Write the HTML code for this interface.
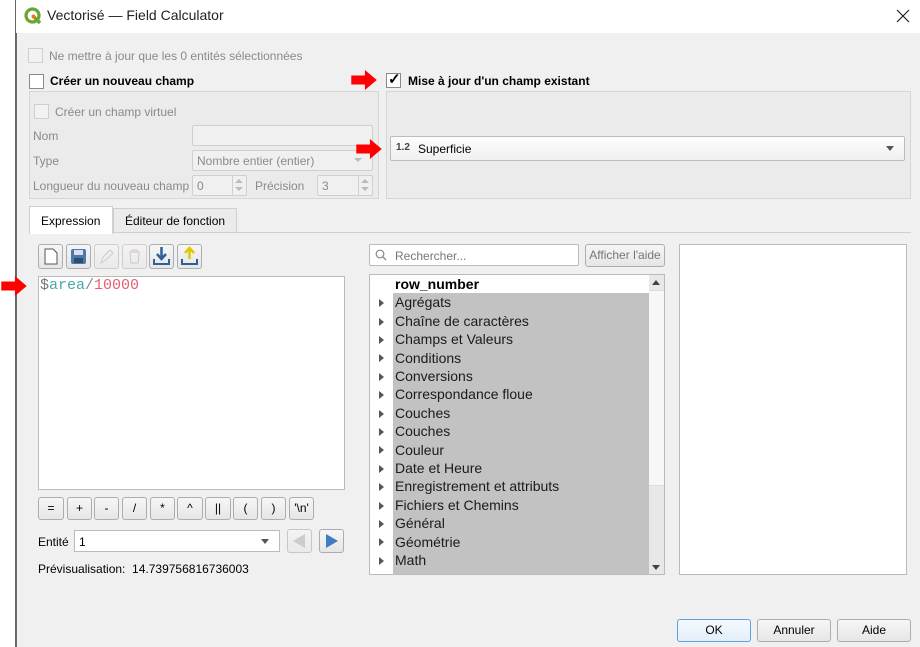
<!DOCTYPE html>
<html><head><meta charset="utf-8"><style>
*{box-sizing:border-box;margin:0;padding:0}
body{width:920px;height:647px;background:#fff;font-family:"Liberation Sans",sans-serif;font-size:12px;color:#000;position:relative;overflow:hidden}
.a{position:absolute}
.dlg{left:16px;top:0;width:904px;height:647px;background:#f0f0f0;border-left:1px solid #6b6b6b}
.title{left:16px;top:0;width:904px;height:33px;background:#fff}
.cb{position:absolute;width:15px;height:15px;border:1px solid #8a8a8a;background:#fff}
.cbd{border-color:#cfcfcf;background:#f2f2f2}
.gray{color:#8a8a8a}
.grp{position:absolute;border:1px solid #d6d6d6;background:#ebebeb}
.inp{position:absolute;border:1px solid #cfcfcf;background:#f0f0f0;border-radius:2px}
.btn{position:absolute;border:1px solid #adadad;background:linear-gradient(#f6f6f6,#e6e6e6);border-radius:3px;text-align:center}
.arrow{position:absolute;width:28px;height:20px}
.li{position:absolute;left:395px;font-size:14px;color:#1b1b1b}
.tri{position:absolute;left:379px;width:0;height:0;border-left:5px solid #555;border-top:4px solid transparent;border-bottom:4px solid transparent}
.spin{position:absolute;width:14px;border-left:1px solid #d0d0d0}
</style></head><body>
<div class="a dlg"></div>
<div class="a title"></div>
<div class="a" style="left:0;top:0;width:16px;height:647px;background:#fff;border-right:1px solid #666"></div>
<svg class="a" style="left:24px;top:7px" width="18" height="18" viewBox="0 0 18 18"><circle cx="8.5" cy="8.5" r="6.5" fill="none" stroke="#6aa637" stroke-width="3.2"/><path d="M10 10 L16 16" stroke="#6aa637" stroke-width="3.5"/><circle cx="9.5" cy="9.5" r="2" fill="#ee7913"/></svg>
<div class="a" style="left:47px;top:7px;font-size:14px;color:#222">Vectorisé — Field Calculator</div>
<svg class="a" style="left:896px;top:9px" width="14" height="14"><path d="M1 1L13 13M13 1L1 13" stroke="#222" stroke-width="1.2"/></svg>

<div class="cb cbd" style="left:28px;top:48px"></div>
<div class="a gray" style="left:49px;top:49px">Ne mettre à jour que les 0 entités sélectionnées</div>
<div class="cb" style="left:29px;top:74px"></div>
<div class="a" style="left:50px;top:74px;font-weight:bold">Créer un nouveau champ</div>
<div class="grp" style="left:29px;top:91px;width:350px;height:108px"></div>
<div class="cb cbd" style="left:34px;top:104px"></div>
<div class="a gray" style="left:55px;top:105px">Créer un champ virtuel</div>
<div class="a gray" style="left:33px;top:129px">Nom</div>
<div class="inp" style="left:192px;top:125px;width:181px;height:21px"></div>
<div class="a gray" style="left:33px;top:154px">Type</div>
<div class="inp" style="left:192px;top:150px;width:181px;height:21px"></div>
<div class="a gray" style="left:197px;top:154px">Nombre entier (entier)</div>
<div class="a" style="left:354px;top:158px;border-top:4px solid #bbb;border-left:4px solid transparent;border-right:4px solid transparent"></div>
<div class="a gray" style="left:33px;top:179px">Longueur du nouveau champ</div>
<div class="inp" style="left:192px;top:175px;width:55px;height:21px"></div>
<div class="spin" style="left:232px;top:176px;height:19px"></div>
<div class="a" style="left:235px;top:179px;border-bottom:4px solid #bbb;border-left:4px solid transparent;border-right:4px solid transparent"></div>
<div class="a" style="left:235px;top:187px;border-top:4px solid #bbb;border-left:4px solid transparent;border-right:4px solid transparent"></div>
<div class="a gray" style="left:197px;top:179px">0</div>
<div class="a gray" style="left:255px;top:179px">Précision</div>
<div class="inp" style="left:317px;top:175px;width:56px;height:21px"></div>
<div class="spin" style="left:358px;top:176px;height:19px"></div>
<div class="a" style="left:361px;top:179px;border-bottom:4px solid #bbb;border-left:4px solid transparent;border-right:4px solid transparent"></div>
<div class="a" style="left:361px;top:187px;border-top:4px solid #bbb;border-left:4px solid transparent;border-right:4px solid transparent"></div>
<div class="a gray" style="left:322px;top:179px">3</div>

<div class="cb" style="left:386px;top:73px"></div>
<div class="a" style="left:388px;top:70px;font-size:15px;font-weight:bold">✓</div>
<div class="a" style="left:408px;top:74px;font-weight:bold">Mise à jour d'un champ existant</div>
<div class="grp" style="left:386px;top:91px;width:525px;height:108px"></div>
<div class="a" style="left:390px;top:136px;width:515px;height:25px;border:1px solid #bcbcbc;background:linear-gradient(#fdfdfd,#f0f0f0);border-radius:2px"></div>
<div class="a" style="left:396px;top:142px;font-size:10px;font-weight:bold;color:#444">1.2</div>
<div class="a" style="left:418px;top:142px">Superficie</div>
<div class="a" style="left:886px;top:146px;border-top:5px solid #555;border-left:4px solid transparent;border-right:4px solid transparent"></div>

<svg class="arrow" style="left:350px;top:70px" viewBox="0 0 28 22"><path d="M0 6H15V0L28 11L15 22V16H0Z" fill="#f00"/></svg>
<svg class="arrow" style="left:355px;top:139px" viewBox="0 0 28 22"><path d="M0 6H15V0L28 11L15 22V16H0Z" fill="#f00"/></svg>
<svg class="arrow" style="left:0px;top:276px" viewBox="0 0 28 22"><path d="M0 6H15V0L28 11L15 22V16H0Z" fill="#f00"/></svg>

<div class="a" style="left:29px;top:232px;width:882px;height:1px;background:#d0d0d0"></div>
<div class="a" style="left:29px;top:206px;width:84px;height:28px;background:#fff;border:1px solid #d0d0d0;border-bottom:none"></div>
<div class="a" style="left:41px;top:214px">Expression</div>
<div class="a" style="left:113px;top:208px;width:124px;height:25px;background:#ebebeb;border:1px solid #d0d0d0"></div>
<div class="a" style="left:125px;top:214px">Éditeur de fonction</div>

<div class="btn" style="left:38px;top:244px;width:25px;height:25px"></div>
<svg class="a" style="left:43px;top:248px" width="16" height="17"><path d="M2 1H10L14 5V16H2Z" fill="#fff" stroke="#555"/></svg>
<div class="btn" style="left:66px;top:244px;width:25px;height:25px"></div>
<svg class="a" style="left:70px;top:248px" width="17" height="17"><rect x="1" y="1" width="15" height="15" rx="2" fill="#4b79ad"/><rect x="4" y="2" width="9" height="5" fill="#dde"/><rect x="4" y="10" width="9" height="5" fill="#2d4c6e"/></svg>
<div class="btn" style="left:94px;top:244px;width:25px;height:25px;opacity:.5"></div>
<svg class="a" style="left:98px;top:248px" width="17" height="17"><path d="M3 15L5 9L12 2L15 5L8 12Z" fill="none" stroke="#ccc"/></svg>
<div class="btn" style="left:122px;top:244px;width:25px;height:25px;opacity:.5"></div>
<svg class="a" style="left:126px;top:248px" width="17" height="17"><path d="M3 4H14M6 4V2H11V4M4 5L5 15H12L13 5" fill="none" stroke="#d4c4c4"/></svg>
<div class="btn" style="left:149px;top:244px;width:25px;height:25px"></div>
<svg class="a" style="left:152px;top:246px" width="19" height="20"><path d="M9.5 1V12M5 8L9.5 13L14 8" stroke="#2d5f9a" stroke-width="2.5" fill="none"/><path d="M2 13V18H17V13" stroke="#2d5f9a" stroke-width="2" fill="none"/></svg>
<div class="btn" style="left:177px;top:244px;width:25px;height:25px"></div>
<svg class="a" style="left:180px;top:246px" width="19" height="20"><path d="M9.5 13V3M5 7L9.5 2L14 7" stroke="#e0c800" stroke-width="2.5" fill="none"/><path d="M2 13V18H17V13" stroke="#2d5f9a" stroke-width="2" fill="none"/></svg>

<div class="a" style="left:38px;top:276px;width:307px;height:214px;background:#fff;border:1px solid #bbb"></div>
<div class="a" style="left:40px;top:277px;font-family:'Liberation Mono',monospace;font-size:15px"><span style="color:#777">$</span><span style="color:#4aa8a8">area</span><span style="color:#888">/</span><span style="color:#e06070">10000</span></div>

<div class="btn" style="left:38px;top:497px;width:26px;height:23px;line-height:21px">=</div>
<div class="btn" style="left:67px;top:497px;width:25px;height:23px;line-height:21px">+</div>
<div class="btn" style="left:94px;top:497px;width:25px;height:23px;line-height:21px">-</div>
<div class="btn" style="left:122px;top:497px;width:25px;height:23px;line-height:21px">/</div>
<div class="btn" style="left:150px;top:497px;width:25px;height:23px;line-height:21px">*</div>
<div class="btn" style="left:177px;top:497px;width:26px;height:23px;line-height:21px">^</div>
<div class="btn" style="left:205px;top:497px;width:26px;height:23px;line-height:21px">||</div>
<div class="btn" style="left:233px;top:497px;width:25px;height:23px;line-height:21px">(</div>
<div class="btn" style="left:261px;top:497px;width:25px;height:23px;line-height:21px">)</div>
<div class="btn" style="left:289px;top:497px;width:25px;height:23px;line-height:21px">'\n'</div>

<div class="a" style="left:38px;top:535px">Entité</div>
<div class="a" style="left:74px;top:530px;width:206px;height:22px;background:#fff;border:1px solid #bbb"></div>
<div class="a" style="left:79px;top:535px">1</div>
<div class="a" style="left:261px;top:539px;border-top:5px solid #555;border-left:4px solid transparent;border-right:4px solid transparent"></div>
<div class="btn" style="left:287px;top:529px;width:25px;height:24px;opacity:.6"></div>
<div class="a" style="left:293px;top:534px;border-right:12px solid #ccc;border-top:7px solid transparent;border-bottom:7px solid transparent"></div>
<div class="btn" style="left:319px;top:529px;width:25px;height:24px"></div>
<div class="a" style="left:326px;top:534px;border-left:12px solid #3d7dc0;border-top:7px solid transparent;border-bottom:7px solid transparent"></div>
<div class="a" style="left:38px;top:562px">Prévisualisation:&nbsp; 14.739756816736003</div>

<div class="a" style="left:369px;top:244px;width:210px;height:22px;background:#fff;border:1px solid #bbb;border-radius:2px"></div>
<svg class="a" style="left:375px;top:249px" width="12" height="12"><circle cx="5" cy="5" r="3.8" fill="none" stroke="#888" stroke-width="1.2"/><path d="M8 8L11 11" stroke="#888" stroke-width="1.3"/></svg>
<div class="a" style="left:395px;top:249px;color:#777">Rechercher...</div>
<div class="btn" style="left:585px;top:244px;width:80px;height:23px;line-height:21px;color:#777">Afficher l'aide</div>

<div class="a" style="left:369px;top:274px;width:296px;height:301px;background:#fff;border:1px solid #bbb"></div>
<div class="a" style="left:393px;top:293px;width:256px;height:281px;background:#c2c2c2"></div>
<div class="a" style="left:649px;top:275px;width:15px;height:299px;background:#e8e8e8"></div>
<div class="a" style="left:649px;top:290px;width:15px;height:196px;background:#f7f7f7;border-top:1px solid #ddd;border-bottom:1px solid #ddd"></div>
<div class="a" style="left:652px;top:280px;border-bottom:5px solid #444;border-left:4px solid transparent;border-right:4px solid transparent"></div>
<div class="a" style="left:652px;top:565px;border-top:5px solid #444;border-left:4px solid transparent;border-right:4px solid transparent"></div>
<div class="li" style="top:276px;font-weight:bold;color:#000">row_number</div>
<div class="li" style="top:294px">Agrégats</div><div class="tri" style="top:299px"></div>
<div class="li" style="top:313px">Chaîne de caractères</div><div class="tri" style="top:318px"></div>
<div class="li" style="top:331px">Champs et Valeurs</div><div class="tri" style="top:336px"></div>
<div class="li" style="top:350px">Conditions</div><div class="tri" style="top:354px"></div>
<div class="li" style="top:368px">Conversions</div><div class="tri" style="top:373px"></div>
<div class="li" style="top:386px">Correspondance floue</div><div class="tri" style="top:391px"></div>
<div class="li" style="top:405px">Couches</div><div class="tri" style="top:410px"></div>
<div class="li" style="top:423px">Couches</div><div class="tri" style="top:428px"></div>
<div class="li" style="top:442px">Couleur</div><div class="tri" style="top:446px"></div>
<div class="li" style="top:460px">Date et Heure</div><div class="tri" style="top:465px"></div>
<div class="li" style="top:478px">Enregistrement et attributs</div><div class="tri" style="top:483px"></div>
<div class="li" style="top:497px">Fichiers et Chemins</div><div class="tri" style="top:502px"></div>
<div class="li" style="top:515px">Général</div><div class="tri" style="top:520px"></div>
<div class="li" style="top:534px">Géométrie</div><div class="tri" style="top:538px"></div>
<div class="li" style="top:552px">Math</div><div class="tri" style="top:557px"></div>

<div class="a" style="left:679px;top:244px;width:228px;height:331px;background:#fff;border:1px solid #bbb"></div>

<div class="btn" style="left:677px;top:619px;width:74px;height:23px;line-height:21px;border-color:#5ca1e0;background:linear-gradient(#f4f9fe,#e3eefa)">OK</div>
<div class="btn" style="left:757px;top:619px;width:74px;height:23px;line-height:21px">Annuler</div>
<div class="btn" style="left:837px;top:619px;width:74px;height:23px;line-height:21px">Aide</div>
</body></html>
